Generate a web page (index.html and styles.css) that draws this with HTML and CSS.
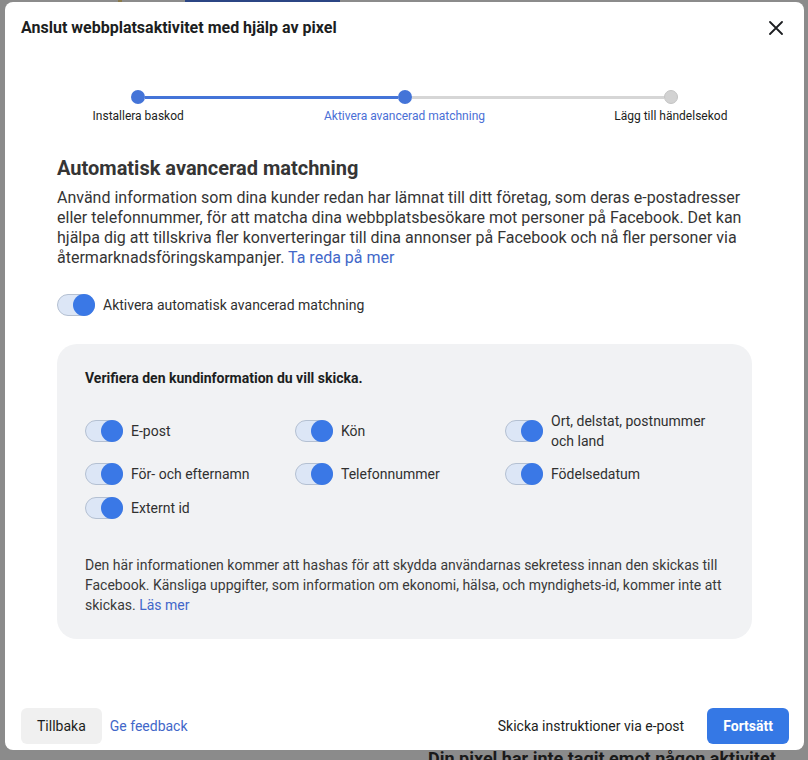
FILE: index.html
```html
<!DOCTYPE html>
<html lang="sv">
<head>
  <meta charset="UTF-8">
  <meta name="viewport" content="width=device-width, initial-scale=1.0">
  <title>Anslut webbplatsaktivitet</title>
  <link rel="stylesheet" href="styles.css">
</head>
<body>
  <div class="page-behind">
    <div class="behind-tab"></div>
    <div class="behind-mark"></div>
    <div class="behind-status">Din pixel har inte tagit emot någon aktivitet</div>
  </div>

  <div class="dialog">
    <div class="dialog-header">
      <div class="dialog-title">Anslut webbplatsaktivitet med hjälp av pixel</div>
      <button class="close-btn" aria-label="Stäng">
        <svg width="14" height="14" viewBox="0 0 14 14">
          <path d="M1 1 L13 13 M13 1 L1 13" stroke="#1c1e21" stroke-width="1.8" stroke-linecap="round"/>
        </svg>
      </button>
    </div>

    <div class="stepper">
      <div class="step done">
        <div class="rail">
          <span class="seg seg-none"></span>
          <span class="dot"></span>
          <span class="seg seg-blue"></span>
        </div>
        <div class="step-label">Installera baskod</div>
      </div>
      <div class="step current">
        <div class="rail">
          <span class="seg seg-blue"></span>
          <span class="dot"></span>
          <span class="seg seg-gray"></span>
        </div>
        <div class="step-label">Aktivera avancerad matchning</div>
      </div>
      <div class="step todo">
        <div class="rail">
          <span class="seg seg-gray"></span>
          <span class="dot"></span>
          <span class="seg seg-none"></span>
        </div>
        <div class="step-label">Lägg till händelsekod</div>
      </div>
    </div>

    <div class="content">
      <h2 class="section-title">Automatisk avancerad matchning</h2>
      <p class="section-text">
        Använd information som dina kunder redan har lämnat till ditt företag, som deras e-postadresser
        eller telefonnummer, för att matcha dina webbplatsbesökare mot personer på Facebook. Det kan
        hjälpa dig att tillskriva fler konverteringar till dina annonser på Facebook och nå fler personer via
        återmarknadsföringskampanjer. <a href="#" class="link">Ta reda på mer</a>
      </p>

      <label class="toggle-row main-toggle">
        <span class="switch on"><span class="knob"></span></span>
        <span class="toggle-text">Aktivera automatisk avancerad matchning</span>
      </label>

      <div class="info-box">
        <div class="box-title">Verifiera den kundinformation du vill skicka.</div>

        <div class="field-grid">
          <label class="toggle-row">
            <span class="switch on"><span class="knob"></span></span>
            <span class="toggle-text">E-post</span>
          </label>
          <label class="toggle-row">
            <span class="switch on"><span class="knob"></span></span>
            <span class="toggle-text">Kön</span>
          </label>
          <label class="toggle-row">
            <span class="switch on"><span class="knob"></span></span>
            <span class="toggle-text">Ort, delstat, postnummer och land</span>
          </label>
          <label class="toggle-row">
            <span class="switch on"><span class="knob"></span></span>
            <span class="toggle-text">För- och efternamn</span>
          </label>
          <label class="toggle-row">
            <span class="switch on"><span class="knob"></span></span>
            <span class="toggle-text">Telefonnummer</span>
          </label>
          <label class="toggle-row">
            <span class="switch on"><span class="knob"></span></span>
            <span class="toggle-text">Födelsedatum</span>
          </label>
          <label class="toggle-row">
            <span class="switch on"><span class="knob"></span></span>
            <span class="toggle-text">Externt id</span>
          </label>
        </div>

        <p class="box-note">
          Den här informationen kommer att hashas för att skydda användarnas sekretess innan den skickas till
          Facebook. Känsliga uppgifter, som information om ekonomi, hälsa, och myndighets-id, kommer inte att
          skickas. <a href="#" class="link">Läs mer</a>
        </p>
      </div>
    </div>

    <div class="dialog-footer">
      <div class="footer-left">
        <button class="btn btn-gray">Tillbaka</button>
        <a href="#" class="link footer-link">Ge feedback</a>
      </div>
      <div class="footer-right">
        <button class="btn btn-plain">Skicka instruktioner via e-post</button>
        <button class="btn btn-blue">Fortsätt</button>
      </div>
    </div>
  </div>
</body>
</html>
```

FILE: styles.css
```css
body {
  margin: 0;
  padding: 2px 4px 0 5px;
  background-color: #8b8b8b;
  font-family: Roboto, 'Liberation Sans', sans-serif;
  color: #1c1e21;
  overflow: hidden;
}

/* page behind the overlay */
.page-behind .behind-tab {
  position: absolute;
  left: 185px;
  top: 0;
  width: 155px;
  height: 10px;
  background-color: #2b4584;
}

.page-behind .behind-mark {
  position: absolute;
  left: 118px;
  top: 0;
  width: 4px;
  height: 10px;
  background-color: #8a7a4a;
}

.page-behind .behind-status {
  position: absolute;
  left: 428px;
  top: 748px;
  font-size: 18px;
  font-weight: 700;
  color: #1a1a1a;
  white-space: nowrap;
}

/* dialog */
.dialog {
  position: relative;
  width: 799px;
  height: 748px;
  background-color: #fff;
  border-radius: 8px;
  display: flex;
  flex-direction: column;
  box-sizing: border-box;
}

.dialog-header {
  display: flex;
  justify-content: space-between;
  align-items: center;
  padding: 16px 21px 0 16px;
}

.dialog-title {
  font-size: 16px;
  line-height: 20px;
  font-weight: 700;
  color: #1c1e21;
}

.close-btn {
  border: none;
  background: none;
  padding: 0;
  width: 14px;
  height: 14px;
  display: flex;
  cursor: pointer;
}

/* stepper */
.stepper {
  display: grid;
  grid-template-columns: repeat(3, 1fr);
  margin-top: 52px;
}

.step {
  display: flex;
  flex-direction: column;
  align-items: center;
}

.rail {
  width: 100%;
  height: 14px;
  display: flex;
  align-items: center;
}

.seg {
  flex: 1;
  height: 3px;
}

.seg-blue {
  background-color: #4474d8;
}

.seg-gray {
  background-color: #d6d6d6;
}

.seg-none {
  background: none;
}

.dot {
  width: 14px;
  height: 14px;
  border-radius: 50%;
  background-color: #4474d8;
  box-sizing: border-box;
}

.todo .dot {
  background-color: #d2d2d2;
  border: 1px solid #c4c4c4;
}

.step-label {
  margin-top: 4px;
  font-size: 12px;
  line-height: 16px;
  color: #1c1e21;
}

.current .step-label {
  color: #4a6fd6;
}

/* content */
.content {
  padding: 0 52px;
}

.section-title {
  margin: 32px 0 0;
  font-size: 20px;
  line-height: 24px;
  font-weight: 700;
  color: #353535;
}

.section-text {
  margin: 8px 0 0;
  font-size: 16px;
  line-height: 20px;
  color: #353535;
}

.link {
  color: #4267c9;
  text-decoration: none;
}

.toggle-row {
  display: flex;
  align-items: center;
  gap: 8px;
  font-size: 14px;
  line-height: 20px;
  color: #303030;
}

.main-toggle {
  margin-top: 26px;
}

.switch {
  flex: none;
  position: relative;
  width: 38px;
  height: 22px;
  border-radius: 11px;
  background-color: #dce6f6;
  border: 1px solid #b4c0d2;
  box-sizing: border-box;
}

.switch .knob {
  position: absolute;
  right: -1px;
  top: -1px;
  width: 22px;
  height: 22px;
  border-radius: 50%;
  background-color: #3a78e6;
}

/* info box */
.info-box {
  margin-top: 28px;
  background-color: #f1f2f4;
  border-radius: 20px;
  padding: 25px 28px 24px;
}

.box-title {
  font-size: 14px;
  line-height: 18px;
  font-weight: 700;
  color: #1c1e21;
}

.field-grid {
  margin-top: 24px;
  display: grid;
  grid-template-columns: repeat(3, 210px);
  row-gap: 12px;
}

.field-grid .toggle-text {
  max-width: 170px;
}

.box-note {
  margin: 36px 0 0;
  font-size: 14px;
  line-height: 20px;
  color: #3a3a3a;
}

/* footer */
.dialog-footer {
  margin-top: auto;
  padding: 0 15px 6px 16px;
  display: flex;
  justify-content: space-between;
  align-items: center;
}

.footer-left, .footer-right {
  display: flex;
  align-items: center;
  gap: 8px;
}

.btn {
  height: 36px;
  border: none;
  border-radius: 6px;
  font-family: inherit;
  font-size: 14px;
  padding: 0 16px;
  cursor: pointer;
}

.btn-gray {
  background-color: #f0f0f0;
  color: #1c1e21;
}

.btn-plain {
  background: none;
  color: #1c1e21;
  padding: 0 15px;
}

.btn-blue {
  background-color: #3578e5;
  color: #fff;
  font-weight: 700;
  padding: 0 16px;
}

.footer-link {
  font-size: 14px;
}
```
